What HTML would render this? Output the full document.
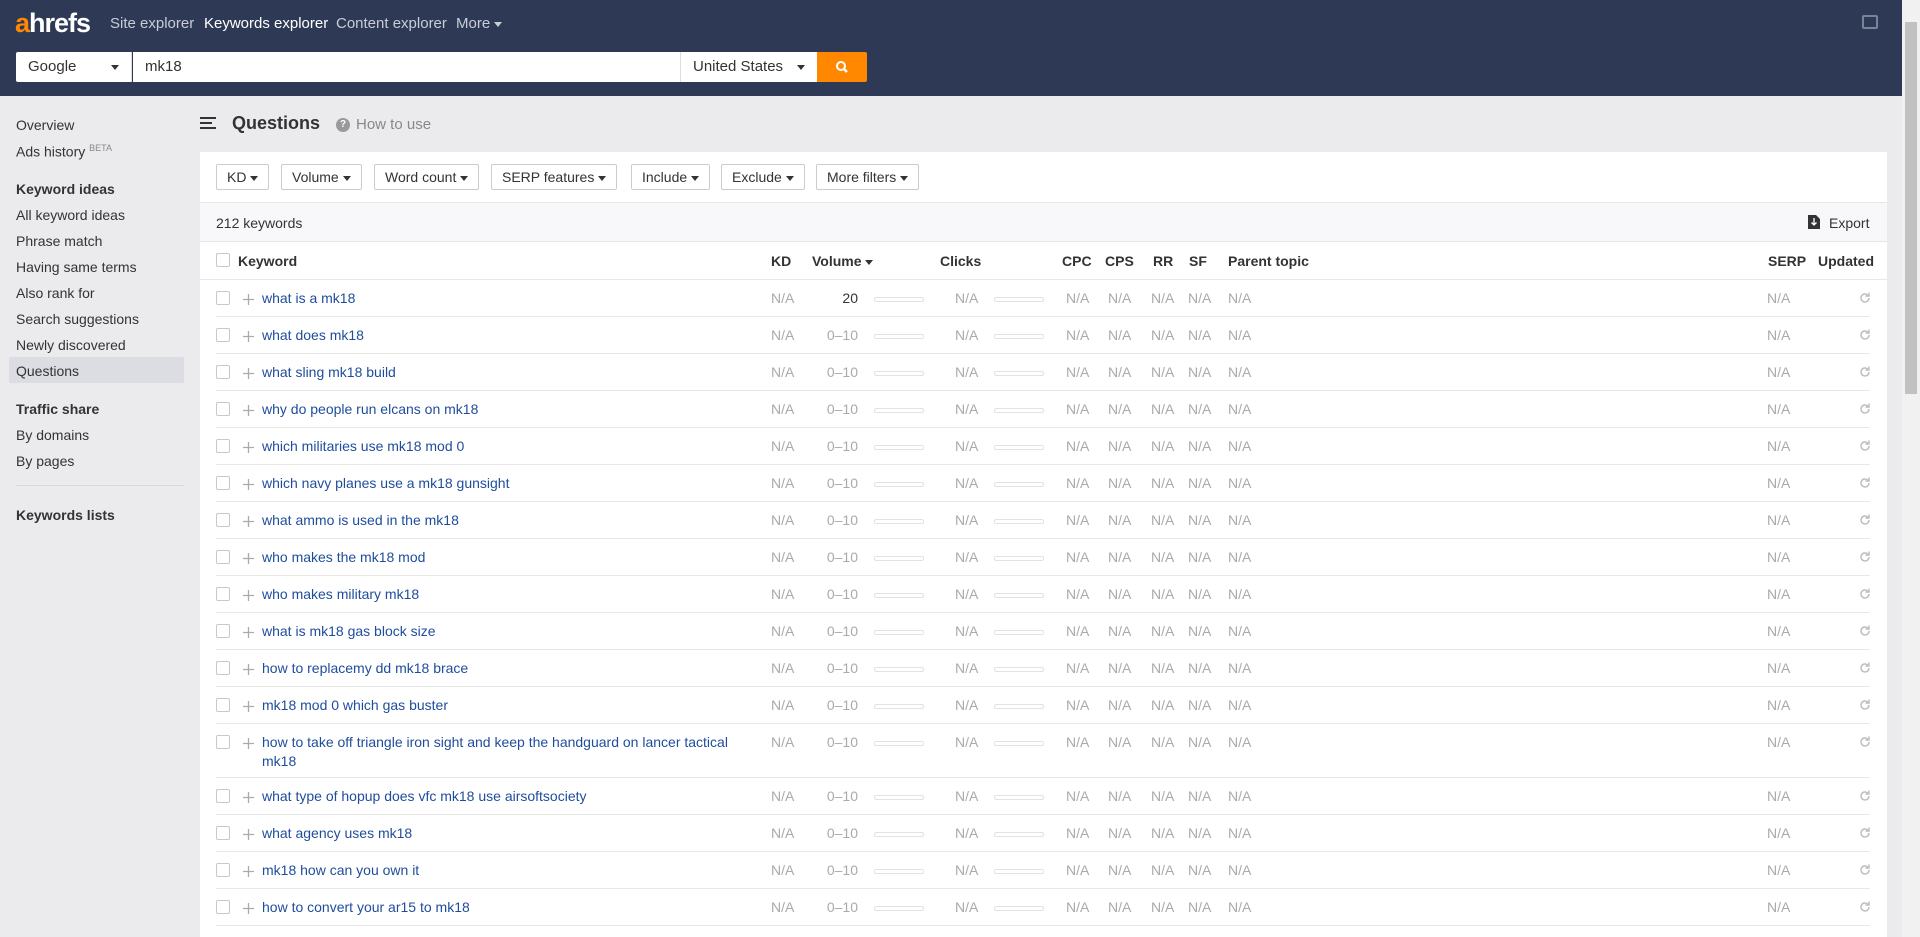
<!DOCTYPE html>
<html><head><meta charset="utf-8"><style>
*{box-sizing:border-box;margin:0;padding:0}
body{width:1920px;height:937px;overflow:hidden;background:#ebebed;font-family:"Liberation Sans",Arial,sans-serif;color:#333;position:relative;font-size:14px}
.hdr{position:absolute;left:0;top:0;width:1902px;height:96px;background:#2e3a55}
.logo{position:absolute;left:15px;top:8px;font-size:27px;font-weight:bold;color:#fff;letter-spacing:-1px}
.logo span{color:#ff8800}
.nav{position:absolute;top:15px;font-size:15px;color:#c8cdd8}
.srch{position:absolute;top:52px;height:30px;background:#fff;font-size:15px;color:#333;line-height:30px}
.tri{display:inline-block;width:0;height:0;border-left:4px solid transparent;border-right:4px solid transparent;border-top:5px solid #333;vertical-align:middle}
.side{position:absolute;left:16px;font-size:14px;color:#333}
.side.b{font-weight:bold}
.card{position:absolute;left:200px;top:152px;width:1687px;height:785px;background:#fff}
.fbtn{position:absolute;top:12px;height:26px;border:1px solid #ccc;border-radius:2px;background:#fff;font-size:14px;line-height:24px;padding:0 10px;color:#333}
.row{position:absolute;left:0;width:1687px;font-size:14px}
.row .ln{position:absolute;left:16px;right:17px;bottom:0;height:1px;background:#e8e8e8}
.c{position:absolute;top:10px}
.cb{position:absolute;left:16px;width:14px;height:14px;border:1px solid #c8c8c8;border-radius:2px;top:11px;background:#fff}
.na{color:#aaa}
.kw{color:#1f4d9c;left:62px;width:500px;line-height:19px;top:9px}
.bar{position:absolute;top:17px;height:5px;border:1px solid #e2e2e2;border-radius:2px;width:50px}
.hd{font-weight:bold;color:#333}
</style></head><body>
<div class="hdr">
<div class="logo"><span>a</span>hrefs</div>
<div class="nav" style="left:110px">Site explorer</div>
<div class="nav" style="left:204px;color:#fff">Keywords explorer</div>
<div class="nav" style="left:336px">Content explorer</div>
<div class="nav" style="left:456px">More <span class="tri" style="border-top-color:#c8cdd8"></span></div>
<div style="position:absolute;left:1862px;top:15px;width:16px;height:14px;border:2px solid #7a8399;border-radius:2px"></div>
<div class="srch" style="left:16px;width:116px;padding-left:12px;border-right:1px solid #ddd;border-radius:2px 0 0 2px">Google<span class="tri" style="position:absolute;right:12px;top:13px"></span></div>
<div class="srch" style="left:133px;width:547px;padding-left:12px">mk18</div>
<div class="srch" style="left:680px;width:137px;padding-left:12px;border-left:1px solid #ddd">United States<span class="tri" style="position:absolute;right:12px;top:13px"></span></div>
<div class="srch" style="left:817px;width:50px;background:#ff8800;border-radius:0 2px 2px 0">
<svg width="50" height="30" viewBox="0 0 50 30"><circle cx="24" cy="14" r="4" fill="none" stroke="#fff" stroke-width="2"/><path d="M27 17l3 3" stroke="#fff" stroke-width="2.4"/></svg></div>
</div>
<div style="position:absolute;left:1902px;top:0;width:18px;height:937px;background:#f1f1f1"></div>
<div style="position:absolute;left:1905px;top:22px;width:12px;height:372px;background:#c1c1c1"></div>

<div style="position:absolute;left:9px;top:357px;width:175px;height:26px;background:#dcdde2;border-radius:2px"></div>
<div class="side" style="top:117px">Overview</div>
<div class="side" style="top:143px">Ads history <sup style="font-size:9px;color:#888">BETA</sup></div>
<div class="side b" style="top:181px">Keyword ideas</div>
<div class="side" style="top:207px">All keyword ideas</div>
<div class="side" style="top:233px">Phrase match</div>
<div class="side" style="top:259px">Having same terms</div>
<div class="side" style="top:285px">Also rank for</div>
<div class="side" style="top:311px">Search suggestions</div>
<div class="side" style="top:337px">Newly discovered</div>
<div class="side" style="top:363px">Questions</div>
<div class="side b" style="top:401px">Traffic share</div>
<div class="side" style="top:427px">By domains</div>
<div class="side" style="top:453px">By pages</div>
<div style="position:absolute;left:16px;top:485px;width:168px;height:1px;background:#d8d8d8"></div>
<div class="side b" style="top:507px">Keywords lists</div>

<svg style="position:absolute;left:200px;top:116px" width="16" height="14"><path d="M0 2h16M0 7h12M0 12h16" stroke="#333" stroke-width="2"/></svg>
<div style="position:absolute;left:232px;top:113px;font-size:18px;font-weight:bold;color:#333">Questions</div>
<div style="position:absolute;left:336px;top:118px;width:14px;height:14px;border-radius:50%;background:#999;color:#fff;font-size:10px;font-weight:bold;text-align:center;line-height:14px">?</div>
<div style="position:absolute;left:356px;top:116px;font-size:15px;color:#888">How to use</div>

<div class="card">
<div class="fbtn" style="left:16px">KD <span class="tri"></span></div>
<div class="fbtn" style="left:81px">Volume <span class="tri"></span></div>
<div class="fbtn" style="left:174px">Word count <span class="tri"></span></div>
<div class="fbtn" style="left:291px">SERP features <span class="tri"></span></div>
<div class="fbtn" style="left:431px">Include <span class="tri"></span></div>
<div class="fbtn" style="left:521px">Exclude <span class="tri"></span></div>
<div class="fbtn" style="left:616px">More filters <span class="tri"></span></div>
<div style="position:absolute;left:0;top:50px;width:1687px;height:40px;background:#f8f8fa;border-top:1px solid #e6e6e6;border-bottom:1px solid #e6e6e6"></div>
<div style="position:absolute;left:16px;top:63px;font-size:14px">212 keywords</div>
<svg style="position:absolute;left:1608px;top:63px" width="12" height="14"><path d="M0 0h8l4 4v10H0z" fill="#333"/><path d="M6 3v7M3.5 7.5L6 10l2.5-2.5" stroke="#fff" stroke-width="1.3" fill="none"/></svg>
<div style="position:absolute;left:1629px;top:63px;font-size:14px">Export</div>

<div class="row" style="top:90px;height:38px">
<div class="cb"></div>
<div class="c hd" style="left:38px;top:11px">Keyword</div>
<div class="c hd" style="left:571px;top:11px">KD</div>
<div class="c hd" style="left:612px;top:11px">Volume <span class="tri"></span></div>
<div class="c hd" style="left:740px;top:11px">Clicks</div>
<div class="c hd" style="left:862px;top:11px">CPC</div>
<div class="c hd" style="left:905px;top:11px">CPS</div>
<div class="c hd" style="left:953px;top:11px">RR</div>
<div class="c hd" style="left:989px;top:11px">SF</div>
<div class="c hd" style="left:1028px;top:11px">Parent topic</div>
<div class="c hd" style="left:1568px;top:11px">SERP</div>
<div class="c hd" style="left:1618px;top:11px">Updated</div>
<div class="ln" style="left:0;right:0"></div>
</div>
</div>

<script>
var kws=["what is a mk18","what does mk18","what sling mk18 build","why do people run elcans on mk18","which militaries use mk18 mod 0","which navy planes use a mk18 gunsight","what ammo is used in the mk18","who makes the mk18 mod","who makes military mk18","what is mk18 gas block size","how to replacemy dd mk18 brace","mk18 mod 0 which gas buster","how to take off triangle iron sight and keep the handguard on lancer tactical mk18","what type of hopup does vfc mk18 use airsoftsociety","what agency uses mk18","mk18 how can you own it","how to convert your ar15 to mk18"];
var card=document.querySelector('.card'),yy=128,h='';
kws.forEach(function(k,i){var ht=i==12?54:37;
h+='<div class="row" style="top:'+yy+'px;height:'+ht+'px"><div class="cb"></div>'+
'<svg class="c" style="left:43px;top:14px" width="11" height="11"><path d="M5.5 0v11M0 5.5h11" stroke="#aaa" stroke-width="1.3"/></svg>'+
'<div class="c kw">'+k+'</div>'+
'<div class="c na" style="left:571px">N/A</div>'+
'<div class="c '+(i?'na':'')+'" style="left:600px;width:58px;text-align:right;'+(i?'':'color:#333')+'">'+(i?'0–10':'20')+'</div>'+
'<div class="bar" style="left:674px"></div>'+
'<div class="c na" style="left:755px">N/A</div>'+
'<div class="bar" style="left:794px"></div>'+
'<div class="c na" style="left:866px">N/A</div><div class="c na" style="left:908px">N/A</div><div class="c na" style="left:951px">N/A</div><div class="c na" style="left:988px">N/A</div><div class="c na" style="left:1028px">N/A</div><div class="c na" style="left:1567px">N/A</div>'+
'<svg class="c" style="left:1659px;top:12px" width="12" height="12"><path d="M10 6a4 4 0 1 1-1.2-2.9" fill="none" stroke="#bbb" stroke-width="1.4"/><path d="M10 0.5v3.5H6.5" fill="none" stroke="#bbb" stroke-width="1.4"/></svg>'+
'<div class="ln"></div></div>';yy+=ht;});
card.insertAdjacentHTML('beforeend',h);
</script>
</body></html>
